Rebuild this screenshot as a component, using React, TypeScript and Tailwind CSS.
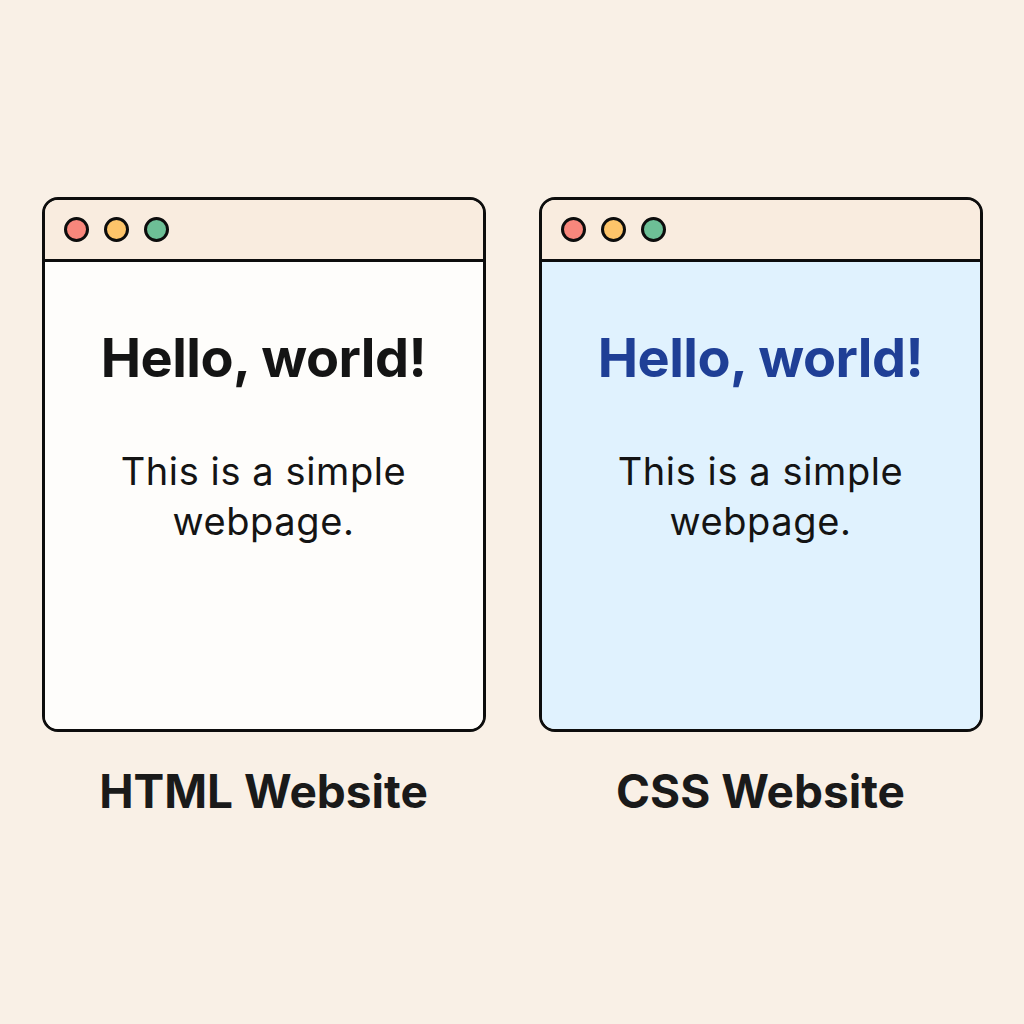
export default function App() {
  return (
    <div className="min-h-[1024px] w-[1024px] bg-[#f9f0e6] pt-[197px] font-['Inter','Liberation_Sans',sans-serif] text-[#141414]">
      <div className="flex justify-center gap-[53px]">
        <BrowserCard label="HTML Website" body="bg-[#fefdfb]" heading="text-[#141414]" />
        <BrowserCard label="CSS Website" body="bg-[#e0f2fe]" heading="text-[#1f3f96]" />
      </div>
    </div>
  );
}

function BrowserCard({
  label,
  body,
  heading,
}: {
  label: string;
  body: string;
  heading: string;
}) {
  return (
    <div className="flex w-[444px] flex-col items-center">
      <div className="flex h-[535px] w-full flex-col overflow-hidden rounded-[16px] border-[3px] border-[#0d0d0d]">
        <div className="flex h-[62px] shrink-0 items-center gap-[15px] border-b-[3px] border-[#0d0d0d] bg-[#f9ecdf] pl-[19px]">
          <span className="h-[25px] w-[25px] rounded-full border-[3px] border-[#0d0d0d] bg-[#f8877c]" />
          <span className="h-[25px] w-[25px] rounded-full border-[3px] border-[#0d0d0d] bg-[#fdc46a]" />
          <span className="h-[25px] w-[25px] rounded-full border-[3px] border-[#0d0d0d] bg-[#6dbf96]" />
        </div>
        <div className={`flex flex-1 flex-col items-center pt-[69px] ${body}`}>
          <h1 className={`text-[54px] leading-none font-bold tracking-[-0.5px] ${heading}`}>
            Hello, world!
          </h1>
          <p className="mt-[61px] text-center text-[38px] leading-[50px] tracking-[0.6px] text-[#141414]">
            This is a simple
            <br />
            webpage.
          </p>
        </div>
      </div>
      <div className="mt-[36px] text-[46px] leading-none font-bold text-[#1a1a1a]">{label}</div>
    </div>
  );
}
